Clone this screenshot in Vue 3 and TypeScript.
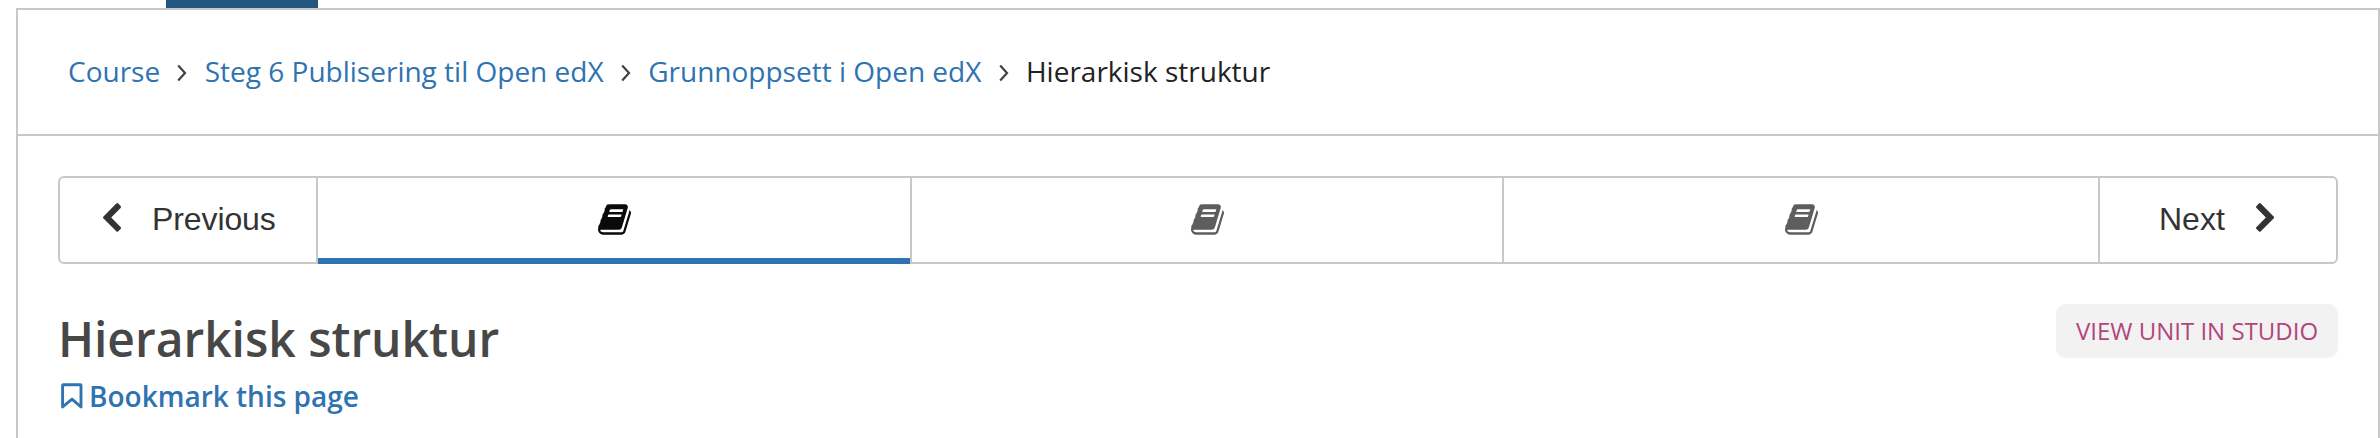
<script setup lang="ts">
interface Crumb {
  label: string
  link: boolean
}

const crumbs: Crumb[] = [
  { label: 'Course', link: true },
  { label: 'Steg 6 Publisering til Open edX', link: true },
  { label: 'Grunnoppsett i Open edX', link: true },
  { label: 'Hierarkisk struktur', link: false },
]

const units = [
  { id: 1, active: true },
  { id: 2, active: false },
  { id: 3, active: false },
]
</script>

<template>
  <div class="page">
    <div class="course-tabs"><div class="active-tab"></div></div>
    <main class="content">
      <nav class="breadcrumbs">
        <template v-for="(crumb, i) in crumbs" :key="crumb.label">
          <svg v-if="i > 0" class="separator" viewBox="0 0 10 18" width="10" height="18">
            <path d="M1.2 1.6 8 9 1.2 16.4" fill="none" stroke="#414141" stroke-width="2.2" />
          </svg>
          <a v-if="crumb.link" class="crumb link">{{ crumb.label }}</a>
          <span v-else class="crumb">{{ crumb.label }}</span>
        </template>
      </nav>

      <div class="sequence">
        <button class="step previous">
          <svg class="chevron" viewBox="0 0 18 29" width="18" height="29">
            <path d="M.5 13.4 13.3.6q1-1 2 0l2.3 2.3q1 1 0 2L8.2 14.4l9.4 9.5q1 1 0 2l-2.3 2.3q-1 1-2 0L.5 15.4q-1-1 0-2z" fill="#333" />
          </svg>
          <span class="step-label">Previous</span>
        </button>
        <button v-for="unit in units" :key="unit.id" class="unit" :class="{ active: unit.active }">
          <svg class="book" viewBox="0 0 1664 1536" width="33" height="31">
            <path
              transform="translate(0 -128)"
              fill="currentColor"
              d="M1639 478q40 57 18 129l-275 906q-19 64-76.500 107.500t-122.500 43.500h-923q-77 0-148.500-53.500t-99.500-131.500q-24-67-2-127 0-4 3-27t4-37q1-8-3-21.500t-3-19.500q2-11 8-21t16.500-23.500 16.500-23.500q23-38 45-91.500t30-91.500q3-10 .5-30t-.5-28q3-11 17-28t17-23q21-36 42-92t25-90q1-9-2.500-32t.5-28q4-13 22-30.500t22-22.500q19-26 42.500-84.500t27.500-96.500q1-8-3-25.500t-2-26.500q2-8 9-18t18-23 17-21q8-12 16.500-30.500t15-35 16-36 19.500-32 26.500-23.500 36-11.500 47.500 5.500l-1 3q38-9 51-9h761q74 0 114 56t18 130l-274 906q-36 119-71.500 153.500t-128.500 34.500h-869q-27 0-38 15-11 16-1 43 24 70 144 70h923q29 0 56-15.500t35-41.500l300-987q7-22 5-57 38 15 59 43zm-1064 2q-4 13 2 22.500t20 9.500h608q13 0 25.500-9.500t16.500-22.500l21-64q4-13-2-22.500t-20-9.500h-608q-13 0-25.500 9.500t-16.500 22.500zm-83 256q-4 13 2 22.500t20 9.500h608q13 0 25.500-9.500t16.500-22.500l21-64q4-13-2-22.500t-20-9.500h-608q-13 0-25.500 9.500t-16.500 22.500z"
            />
          </svg>
        </button>
        <button class="step next">
          <span class="step-label">Next</span>
          <svg class="chevron" viewBox="0 0 18 29" width="18" height="29">
            <path transform="translate(18.1 0) scale(-1 1)" d="M.5 13.4 13.3.6q1-1 2 0l2.3 2.3q1 1 0 2L8.2 14.4l9.4 9.5q1 1 0 2l-2.3 2.3q-1 1-2 0L.5 15.4q-1-1 0-2z" fill="#333" />
          </svg>
        </button>
      </div>

      <div class="unit-header">
        <div class="heading">
          <h1 class="title">Hierarkisk struktur</h1>
          <a class="bookmark">
            <svg viewBox="0 0 22 26" width="22" height="26">
              <path d="M2.200 1.800H19.400Q20 1.800 20 2.400V24L11 16.200 1.600 24V2.400Q1.600 1.800 2.200 1.800z" fill="none" stroke="currentColor" stroke-width="2.900" stroke-linejoin="round" />
            </svg>
            <span class="bookmark-label">Bookmark this page</span>
          </a>
        </div>
        <a class="studio">VIEW UNIT IN STUDIO</a>
      </div>
    </main>
  </div>
</template>

<style>
body {
  background: #fff;
  overflow: hidden;
}
</style>

<style scoped>
.page {
  box-sizing: border-box;
  width: 2380px;
  height: 438px;
  overflow: hidden;
  padding-left: 16px;
  background: #fff;
  font-family: 'Open Sans', sans-serif;
}
.course-tabs {
  height: 8px;
  padding-left: 150px;
}
.active-tab {
  width: 152px;
  height: 8px;
  background: #23567f;
}
.content {
  box-sizing: border-box;
  height: 440px;
  border: 2px solid #c8c8c8;
}
.breadcrumbs {
  display: flex;
  align-items: center;
  box-sizing: border-box;
  height: 126px;
  padding: 0 0 2px 50px;
  border-bottom: 2px solid #c8c8c8;
}
.crumb {
  font-size: 28px;
  line-height: 40px;
  white-space: nowrap;
  color: #222;
}
.link {
  color: #2f73b1;
}
.separator {
  margin: 4px 17.3px 0 17.3px;
}
.sequence {
  display: flex;
  box-sizing: border-box;
  width: 2280px;
  height: 88px;
  margin: 40px 0 0 40px;
  border: 2px solid #c8c8c8;
  border-radius: 6px;
}
button {
  box-sizing: border-box;
  margin: 0;
  padding: 0;
  border: 0;
  background: transparent;
}
.step {
  display: flex;
  flex-shrink: 0;
  align-items: center;
  color: #333;
  font-family: 'Liberation Sans', Arial, sans-serif;
  font-size: 32px;
}
.step-label {
  padding-bottom: 2px;
  line-height: 40px;
  white-space: nowrap;
}
.chevron {
  margin-bottom: 5px;
}
.previous {
  width: 258px;
  padding-left: 43px;
  border-right: 2px solid #c8c8c8;
}
.previous .step-label {
  margin-left: 31px;
  letter-spacing: -0.1px;
}
.next {
  width: 236px;
  padding-left: 59px;
}
.next .chevron {
  margin-left: 31px;
}
.unit {
  display: flex;
  flex: 0 0 592px;
  align-items: center;
  justify-content: center;
  padding-bottom: 2px;
  border-right: 2px solid #c8c8c8;
  color: #5e5e5e;
}
.unit:nth-last-child(2) {
  flex-basis: 596px;
}
.unit.active {
  flex-basis: 594px;
  height: 86px;
  padding-bottom: 4px;
  color: #0a0a0a;
  background: linear-gradient(#2f73b1, #2f73b1) bottom / 100% 6px no-repeat padding-box;
}
.unit-header {
  display: flex;
  justify-content: space-between;
  width: 2280px;
  margin: 40px 0 0 40px;
}
.heading {
  display: flex;
  flex-direction: column;
}
.title {
  margin: 0;
  color: #474747;
  font-size: 48px;
  font-weight: 600;
  letter-spacing: -0.04px;
  line-height: 69px;
  white-space: nowrap;
}
.bookmark {
  display: flex;
  align-items: center;
  margin-left: 3px;
  color: #2f73b1;
}
.bookmark-label {
  margin-left: 6px;
  font-size: 28px;
  font-weight: 600;
  line-height: 46px;
  white-space: nowrap;
}
.studio {
  box-sizing: border-box;
  width: 282px;
  height: 54px;
  border-radius: 10px;
  background: #f2f2f2;
  color: #b2457b;
  font-size: 24px;
  line-height: 54px;
  text-align: center;
  white-space: nowrap;
}
</style>
